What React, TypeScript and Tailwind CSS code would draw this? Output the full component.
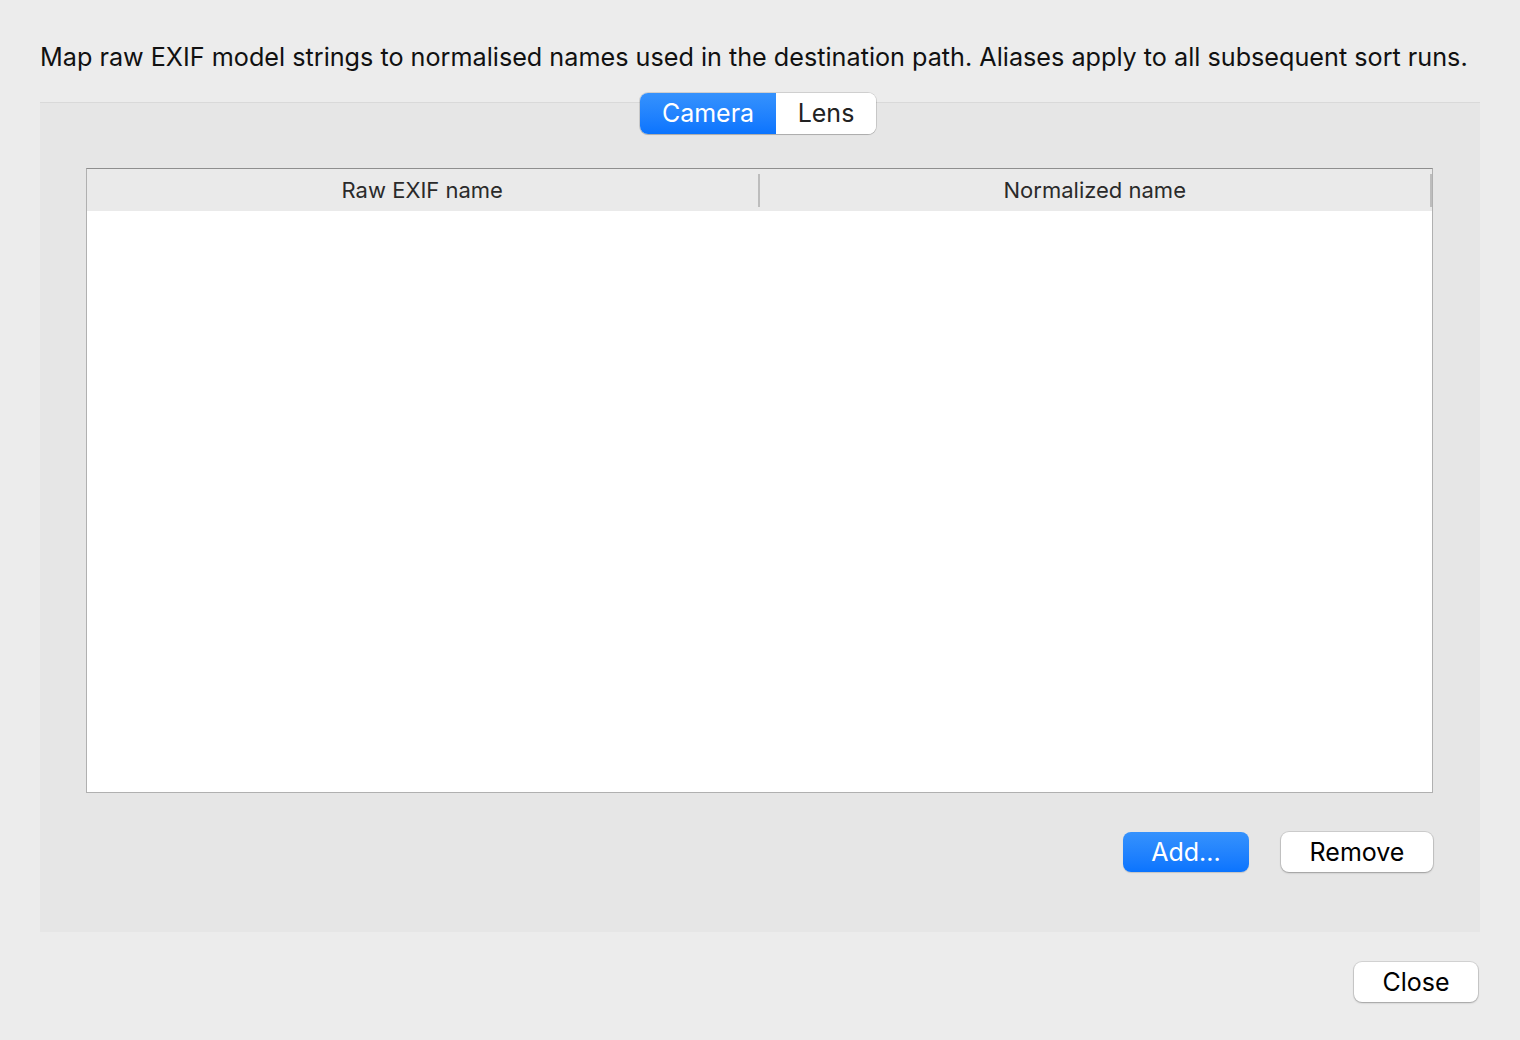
import { useState } from "react";

type AliasKind = "Camera" | "Lens";

type Alias = {
  raw: string;
  normalized: string;
};

const font = { fontFamily: 'Inter, "Liberation Sans", Arial, sans-serif' };

function SegmentedControl(props: { value: AliasKind; onChange: (v: AliasKind) => void }) {
  const { value, onChange } = props;
  const items: { kind: AliasKind; width: string }[] = [
    { kind: "Camera", width: "w-[136px]" },
    { kind: "Lens", width: "w-[100px]" },
  ];

  return (
    <div className="flex h-[41px] rounded-[8px] bg-white shadow-[0_0_0_1px_rgba(0,0,0,0.12),0_1px_1px_rgba(0,0,0,0.15)] overflow-hidden">
      {items.map(({ kind, width }) => {
        const active = kind === value;
        return (
          <button
            key={kind}
            onClick={() => onChange(kind)}
            className={
              (active
                ? "text-white bg-gradient-to-b from-[#3592fd] to-[#0a74fe] "
                : "text-[#222222] bg-white ") +
              "text-[25px] leading-none " +
              width
            }
          >
            {kind}
          </button>
        );
      })}
    </div>
  );
}

function PushButton(props: { label: string; primary?: boolean; width: string }) {
  const { label, primary, width } = props;
  return (
    <button
      className={
        (primary
          ? "text-white bg-gradient-to-b from-[#3592fd] to-[#0a74fe] shadow-[0_1px_1px_rgba(0,0,0,0.15)] "
          : "text-black bg-white shadow-[0_0_0_1px_rgba(0,0,0,0.1),0_1px_2px_rgba(0,0,0,0.25)] ") +
        "h-[40px] rounded-[8px] text-[25px] leading-none " +
        width
      }
    >
      {label}
    </button>
  );
}

export default function App() {
  const [kind, setKind] = useState<AliasKind>("Camera");
  const [aliases] = useState<Record<AliasKind, Alias[]>>({ Camera: [], Lens: [] });

  const rows = aliases[kind];

  return (
    <div className="w-full h-[1040px] bg-[#ececec] px-[40px] pt-[42px] flex flex-col" style={font}>
      <p className="text-[25.2px] leading-[30px] text-[#111111] whitespace-nowrap">
        Map raw EXIF model strings to normalised names used in the destination path. Aliases apply to all subsequent sort runs.
      </p>

      <div className="mt-[30px] h-[830px] bg-[#e6e6e6] border-t border-[#d9d9d9] pl-[46px] pr-[47px] flex flex-col">
        <div className="-mt-[10px] mr-[3px] self-center">
          <SegmentedControl value={kind} onChange={setKind} />
        </div>

        <div className="mt-[34px] h-[625px] bg-white border border-[#b0b0b0] border-t-[#8e8e8e] flex flex-col">
          <div className="h-[42px] bg-[#eaeaea] flex items-center text-[22px] text-[#2a2a2a]">
            <div className="flex-1 flex justify-center">Raw EXIF name</div>
            <div className="w-[2px] h-[33px] bg-[#bdbdbd]" />
            <div className="flex-1 flex justify-center">Normalized name</div>
            <div className="w-[2px] h-[33px] bg-[#bdbdbd]" />
          </div>
          <div className="flex-1">
            {rows.map((row) => (
              <div key={row.raw} className="flex h-[28px] items-center text-[20px]">
                <div className="flex-1 px-3">{row.raw}</div>
                <div className="flex-1 px-3">{row.normalized}</div>
              </div>
            ))}
          </div>
        </div>

        <div className="mt-[39px] flex justify-end gap-[32px]">
          <PushButton label="Add..." primary width="w-[126px]" />
          <PushButton label="Remove" width="w-[152px]" />
        </div>
      </div>

      <div className="mt-[30px] flex justify-end">
        <div className="mr-[2px]">
          <PushButton label="Close" width="w-[124px]" />
        </div>
      </div>
    </div>
  );
}
